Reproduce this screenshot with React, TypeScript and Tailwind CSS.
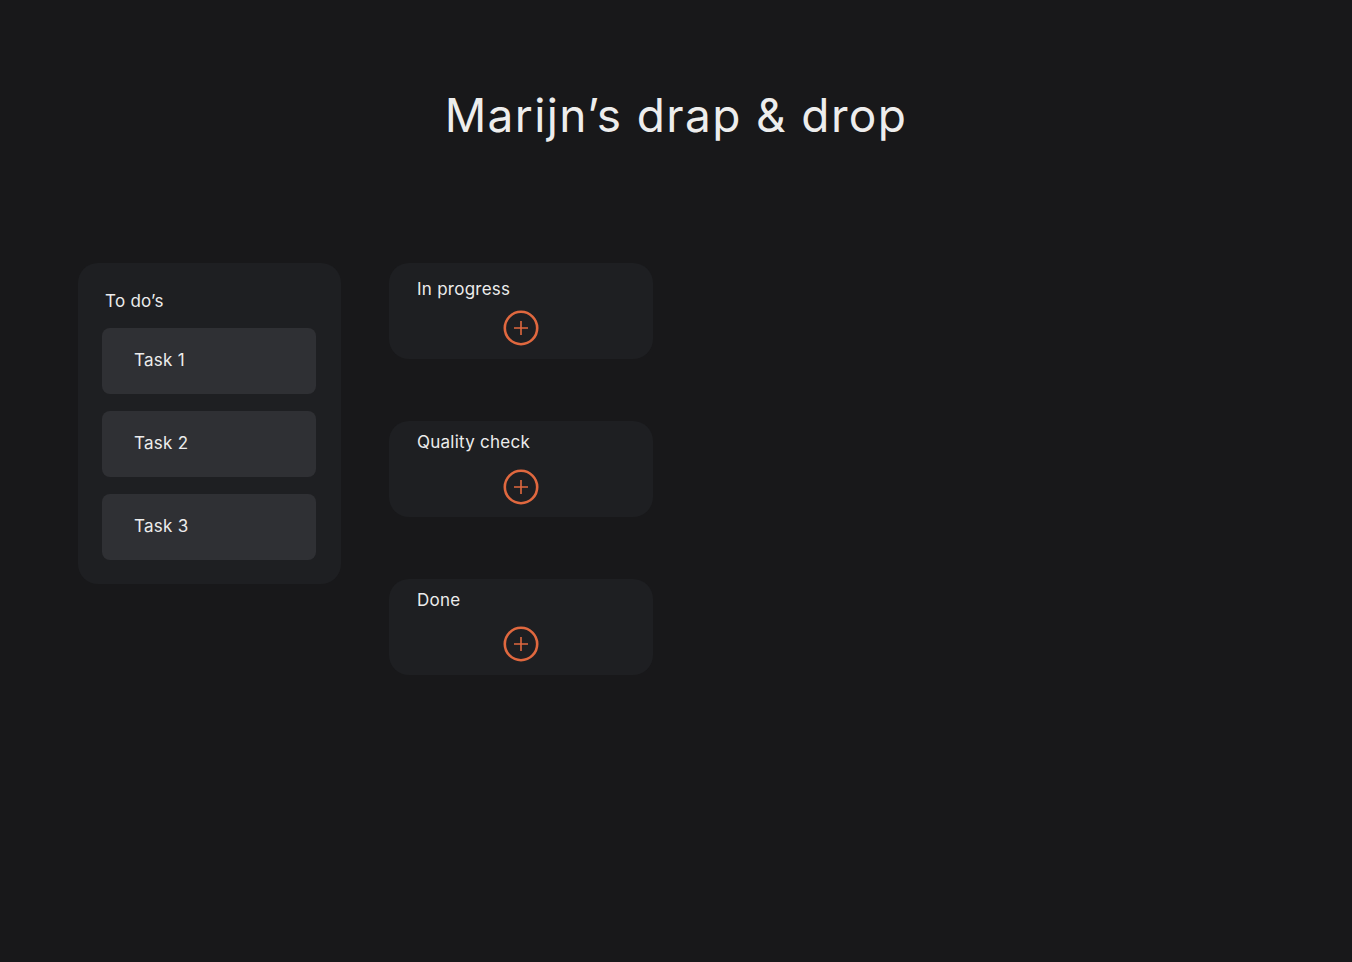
import React from "react";

const TASKS = ["Task 1", "Task 2", "Task 3"];
const STAGES = [
  { title: "In progress", top: "pt-[14px]", gap: "mt-[9px]" },
  { title: "Quality check", top: "pt-[9px]", gap: "mt-[15px]" },
  { title: "Done", top: "pt-[9px]", gap: "mt-[14px]" },
];

function PlusCircle() {
  return (
    <svg width="36" height="36" viewBox="0 0 36 36" fill="none">
      <circle cx="18" cy="18" r="16.2" stroke="#e0683f" strokeWidth="2.6" />
      <path d="M18 11V25M11 18H25" stroke="#e0683f" strokeWidth="1.6" />
    </svg>
  );
}

function StageColumn({ title, top, gap }: { title: string; top: string; gap: string }) {
  return (
    <div className={`w-[264px] h-[96px] rounded-[20px] bg-[#1e1f22] ${top} flex flex-col`}>
      <span className="pl-[28px] text-[17px] leading-[24px] tracking-[0.015em] text-[#ececec]">
        {title}
      </span>
      <div className={`${gap} flex justify-center`}>
        <button className="flex items-center justify-center">
          <PlusCircle />
        </button>
      </div>
    </div>
  );
}

export default function App() {
  return (
    <div
      className="min-h-screen w-full bg-[#18181a] text-[#ececec]"
      style={{ fontFamily: "Inter, 'Noto Sans', sans-serif" }}
    >
      <h1 className="pt-[87px] text-center text-[46px] leading-[56px] font-normal tracking-[0.03em] text-[#ededed]">
        Marijn’s drap &amp; drop
      </h1>

      <div className="mt-[120px] flex items-start gap-[48px] pl-[78px]">
        {/* to do column */}
        <div className="w-[263px] rounded-[20px] bg-[#1e1f22] pt-[26px] pb-[24px] pl-[24px] pr-[25px]">
          <span className="block pl-[3px] text-[17px] leading-[24px] tracking-[0.015em]">
            To do’s
          </span>
          <div className="mt-[15px] flex flex-col gap-[17px]">
            {TASKS.map((task) => (
              <div
                key={task}
                className="h-[66px] rounded-[8px] bg-[#2f3034] pl-[32px] flex items-center text-[17px] tracking-[0.015em]"
              >
                {task}
              </div>
            ))}
          </div>
        </div>

        <div className="flex flex-col gap-[62px]">
          {STAGES.map((stage) => (
            <StageColumn key={stage.title} {...stage} />
          ))}
        </div>
      </div>
    </div>
  );
}
